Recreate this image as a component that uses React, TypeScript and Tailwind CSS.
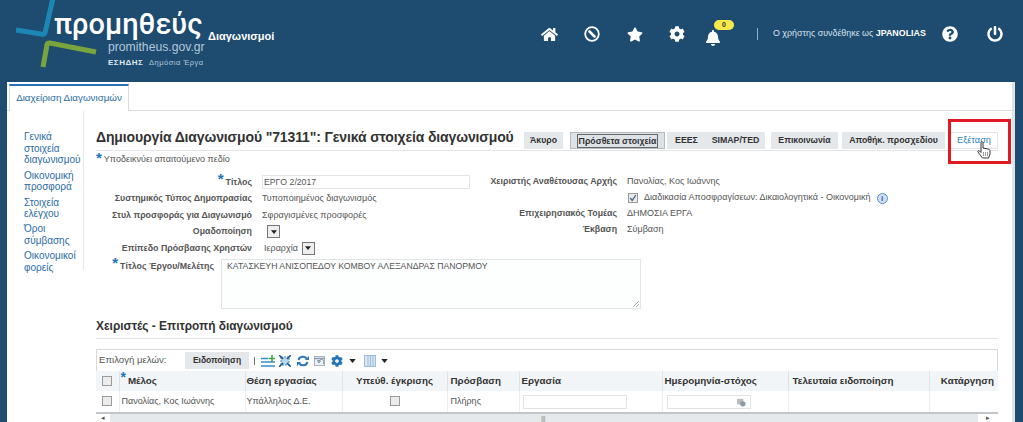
import React from "react";
import { FaHome, FaStar, FaCog, FaBell, FaQuestionCircle, FaPowerOff } from "react-icons/fa";

const Label = ({ children, req }: { children: React.ReactNode; req?: boolean }) => (
  <div className="text-right font-bold text-[8.8px] text-[#555] whitespace-nowrap">
    {req && <span className="text-[#1b75bc] text-[15px] leading-[8px] font-bold align-[1px] mr-[2px]">*</span>}
    {children}
  </div>
);

const Btn = ({ children, w, active, link }: { children: React.ReactNode; w: string; active?: boolean; link?: boolean }) => (
  <div className={`h-[17px] flex items-center justify-center whitespace-nowrap ${w} ${link ? "bg-white border border-[#e2e6ea] text-[#2f7fc4] text-[9.2px]" : active ? "bg-[#dde2e6] border border-[#b5babf] text-[#333] font-bold text-[8.75px]" : "bg-[#e4e8eb] text-[#333] font-bold text-[8.75px]"}`}>
    {active ? <span className="border border-[#666] px-[1px] leading-[12px]">{children}</span> : children}
  </div>
);

const Check = ({ on }: { on?: boolean }) => (
  <span className="inline-flex w-[10px] h-[10px] border border-[#9a9a9a] bg-[#ececec] items-center justify-center align-middle">
    {on && (
      <svg viewBox="0 0 10 10" className="w-[8px] h-[8px]"><path d="M1.5 5l2.5 3 4.5-6.5" fill="none" stroke="#3b5d86" strokeWidth="1.5" /></svg>
    )}
  </span>
);

const Drop = () => (
  <span className="inline-flex w-[13px] h-[13px] border border-[#777] bg-[#eceef0] items-center justify-center">
    <svg viewBox="0 0 8 5" className="w-[6px] h-[4px]"><path d="M0 0h8L4 5z" fill="#222" /></svg>
  </span>
);

const Nav = ({ children }: { children: React.ReactNode }) => <div className="text-[#2b6ca3] leading-[11.7px] mb-[3.5px]">{children}</div>;

export default function App() {
  return (
    <div className="w-[1023px] h-[422px] overflow-hidden bg-[#1e4b70] relative text-[9px] text-[#555]" style={{ fontFamily: '"Liberation Sans", Arial, sans-serif' }}>
      {/* header */}
      <div className="h-[82px] flex relative">
        <svg viewBox="0 0 110 72" className="w-[110px] h-[72px] shrink-0 absolute left-0 top-0">
          <path d="M53 -2 L45 33 Q44 35 41 34 L16 30" fill="none" stroke="#1c87b5" strokeWidth="5" />
          <path d="M43 67 L47 45 Q47 43 50 43 L96 52" fill="none" stroke="#7aa53c" strokeWidth="5" />
        </svg>
        <div className="absolute left-[54px] top-[6px] text-white text-[29px] leading-[36px] font-medium" style={{ fontFamily: 'Roboto, sans-serif' }}>προμηθεύς</div>
        <div className="absolute left-[108px] top-[39px] text-[#b4c8d8] text-[12.2px] leading-[16px]">promitheus.gov.gr</div>
        <div className="absolute left-[108px] top-[58px] text-[#dfe8ef] text-[8px] leading-[10px] font-bold tracking-[0.5px]">ΕΣΗΔΗΣ</div>
        <div className="absolute left-[149px] top-[58px] text-[#b4c8d8] text-[7.5px] leading-[10px] tracking-[0.5px]">Δημόσια Έργα</div>
        <div className="absolute left-[208px] top-[29px] text-white text-[11px] leading-[14px] font-bold">Διαγωνισμοί</div>

        <div className="ml-auto flex items-center h-[68px] text-white pr-[20px]">
          <FaHome className="w-[17px] h-[15px]" />
          <svg viewBox="0 0 16 16" className="w-[16px] h-[16px] ml-[26px]">
            <circle cx="8" cy="8" r="6.8" fill="none" stroke="#fff" strokeWidth="1.8" />
            <path d="M5.5 5.5L10.500 10.500" stroke="#fff" strokeWidth="2.600" strokeLinecap="round" />
          </svg>
          <FaStar className="w-[16px] h-[15px] ml-[27px]" />
          <FaCog className="w-[16px] h-[16px] ml-[26px]" />
          <div className="relative ml-[21px] w-[14px]">
            <FaBell className="w-[14px] h-[16px] mt-[8px]" />
            <span className="absolute left-[8px] top-[-2px] w-[20px] h-[10px] rounded-[5px] bg-[#f7e94b] text-[#333] text-[7px] leading-[10px] text-center font-bold">0</span>
          </div>
          <span className="w-px h-[12px] bg-[#8fb0c9] ml-[37px]" />
          <span className="ml-[15px] text-[#d9e4ec] text-[8.9px] whitespace-nowrap w-[155px]">Ο χρήστης συνδέθηκε ως <b className="text-white">JPANOLIAS</b></span>
          <FaQuestionCircle className="w-[16px] h-[16px] ml-[14px]" />
          <FaPowerOff className="w-[16px] h-[16px] ml-[29px]" />
        </div>
      </div>

      {/* panel */}
      <div className="ml-[7px] mr-[8px] h-[340px] bg-white border-r-[3px] border-[#dfe3e6] flex flex-col relative">
        <div className="h-[29px] border-b border-[#d8dcdf] pl-[2px] pt-[2px] shrink-0 flex">
          <div className="w-[120px] h-[27px] bg-white border-t-[2px] border-[#2a6fb5] border-x border-x-[#d8dcdf] text-[#2b6ca3] text-[9.8px] flex items-center justify-center relative">Διαχείριση Διαγωνισμών</div>
        </div>
        <div className="flex flex-1 min-h-0">
          {/* side */}
          <div className="w-[77px] h-[159px] border-r border-[#e6e8ea] shrink-0 pt-[20px] pl-[17px] text-[10px]">
            <Nav>Γενικά<br />στοιχεία<br />διαγωνισμού</Nav>
            <Nav>Οικονομική<br />προσφορά</Nav>
            <Nav>Στοιχεία<br />ελέγχου</Nav>
            <Nav>Όροι<br />σύμβασης</Nav>
            <Nav>Οικονομικοί<br />φορείς</Nav>
          </div>
          {/* main */}
          <div className="ml-[12px] w-[902px] flex flex-col">
            <div className="h-[40px] border-b border-[#e2e4e6] flex items-start pt-[21px] shrink-0">
              <div className="w-[428px] text-[14px] leading-[18px] font-bold text-[#333] tracking-[-0.13px] whitespace-nowrap -mt-[4px]">Δημιουργία Διαγωνισμού "71311": Γενικά στοιχεία διαγωνισμού</div>
              <div className="flex">
                <Btn w="w-[39px]">Άκυρο</Btn>
                <Btn w="w-[95px] ml-[7px]" active>Πρόσθετα στοιχεία</Btn>
                <Btn w="w-[39px] ml-[2px]">ΕΕΕΣ</Btn>
                <Btn w="w-[59px]">SIMAP/TED</Btn>
                <Btn w="w-[67px] ml-[6px]">Επικοινωνία</Btn>
                <Btn w="w-[103px] ml-[4px]">Αποθήκ. προσχεδίου</Btn>
                <Btn w="w-[48px] ml-[5px]" link>Εξέταση</Btn>
              </div>
            </div>
            <div className="h-[17px] flex items-center shrink-0">
              <span className="text-[#1b75bc] text-[15px] leading-[8px] font-bold mr-[2px] -mt-[4px]">*</span>Υποδεικνύει απαιτούμενο πεδίο
            </div>

            <div className="flex h-[85px] mt-[6px] shrink-0">
              <div className="grid grid-cols-[156px_auto] gap-x-[10px] w-[384px] auto-rows-[16.5px] items-center content-start">
                <Label req>Τίτλος</Label>
                <div className="w-[208px] h-[14px] border border-[#e2e5e8] pl-[1px] leading-[13px] text-[8.7px]">ΕΡΓΟ 2/2017</div>
                <Label>Συστημικός Τύπος Δημοπρασίας</Label>
                <div>Τυποποιημένος διαγωνισμός</div>
                <Label>Στυλ προσφοράς για Διαγωνισμό</Label>
                <div>Σφραγισμένες προσφορές</div>
                <Label>Ομαδοποίηση</Label>
                <div className="pl-[5px] flex"><Drop /></div>
                <Label>Επίπεδο Πρόσβασης Χρηστών</Label>
                <div className="flex items-center gap-[4px]"><span className="pl-[2px]">Ιεραρχία</span><Drop /></div>
              </div>
              <div className="grid grid-cols-[137px_auto] gap-x-[10px] auto-rows-[16px] items-center content-start">
                <Label>Χειριστής Αναθέτουσας Αρχής</Label>
                <div>Πανολίας, Κος Ιωάννης</div>
                <div />
                <div className="flex items-center gap-[6px] whitespace-nowrap pl-[1px]"><Check on /><span>Διαδικασία Αποσφραγίσεων: Δικαιολογητικά - Οικονομική</span>
                  <span className="w-[11px] h-[11px] rounded-full bg-[#cfe0f2] border border-[#5b8fd0] text-[#2a5fae] text-[8px] leading-[9px] text-center font-bold">i</span>
                </div>
                <Label>Επιχειρησιακός Τομέας</Label>
                <div>ΔΗΜΟΣΙΑ ΕΡΓΑ</div>
                <Label>Έκβαση</Label>
                <div>Σύμβαση</div>
              </div>
            </div>

            <div className="flex h-[50px] shrink-0 pl-[3px]">
              <div className="w-[115px]"><Label req>Τίτλος Έργου/Μελέτης</Label></div>
              <div className="ml-[7px] w-[420px] h-[50px] border border-[#e2e5e8] bg-[#fdfefe] pl-[5px] leading-[13px] text-[8.7px] relative">
                ΚΑΤΑΣΚΕΥΗ ΑΝΙΣΟΠΕΔΟΥ ΚΟΜΒΟΥ ΑΛΕΞΑΝΔΡΑΣ ΠΑΝΟΡΜΟΥ
                <svg viewBox="0 0 6 6" className="absolute right-[1px] bottom-[1px] w-[6px] h-[6px]"><path d="M0 6L6 0M3 6l3-3" stroke="#aaa" strokeWidth="1" /></svg>
              </div>
            </div>

            <div className="mt-[8px] h-[22px] border-b border-[#e2e4e6] text-[11.9px] leading-[18px] font-bold text-[#333] shrink-0">Χειριστές - Επιτροπή διαγωνισμού</div>

            <div className="mt-[10px] w-[902px] border-t border-x border-[#d5d8da] h-[22px] flex items-center pl-[1px] shrink-0">
              <span className="w-[87px] pl-[1px] text-[9.6px]">Επιλογή μελών:</span>
              <span className="w-[64px] h-[17px] bg-[#e4e8eb] font-bold text-[8.5px] text-[#333] flex items-center justify-center">Ειδοποίηση</span>
              <span className="w-px h-[8px] bg-[#777] ml-[5px]" />
              <svg viewBox="0 0 14 12" className="w-[14px] h-[12px] ml-[6px]"><path d="M0 3.500h7M0 7h14M0 11h14" stroke="#3a8fc9" strokeWidth="1.300" /><path d="M11 0v7M7.500 3.500h7" stroke="#3fa648" strokeWidth="1.600" /></svg>
              <svg viewBox="0 0 12 12" className="w-[12px] h-[12px] ml-[4px]"><rect x="2" y="2" width="8" height="8" fill="#b8d6ea" stroke="#3a8fc9" strokeDasharray="2 1" /><path d="M0 0l4 4M12 0L8 4M0 12l4-4M12 12L8 8" stroke="#1c4f87" strokeWidth="1.500" /></svg>
              <svg viewBox="0 0 12 12" className="w-[12px] h-[12px] ml-[6px]"><path d="M1.500 5A4.500 4 0 0 1 10 4M10.500 7A4.500 4 0 0 1 2 8" fill="none" stroke="#2c78bf" strokeWidth="2" /><path d="M8 5h4V1zM4 7H0v4z" fill="#2c78bf" /></svg>
              <svg viewBox="0 0 12 12" className="w-[12px] h-[12px] ml-[5px]"><rect x="0.500" y="1.500" width="10" height="9" fill="#eef2f6" stroke="#a7b5c4" /><path d="M0 3.500h11" stroke="#8b9fb5" strokeWidth="1.500" /><path d="M9 9A2.500 2.500 0 1 0 5 6.500M3.500 5.500L5 8l1.500-2z" fill="none" stroke="#7a8fa6" /></svg>
              <FaCog className="w-[12px] h-[12px] ml-[5px] text-[#2474b8]" />
              <svg viewBox="0 0 8 5" className="w-[7px] h-[4px] ml-[6px]"><path d="M0 0h8L4 5z" fill="#222" /></svg>
              <svg viewBox="0 0 12 12" className="w-[12px] h-[12px] ml-[8px]"><rect x="0.500" y="0.500" width="11" height="11" fill="#d6e6f5" stroke="#9dbcdb" /><path d="M4 0v12M6.500 0v12M9 0v12" stroke="#9dbcdb" /></svg>
              <svg viewBox="0 0 8 5" className="w-[7px] h-[4px] ml-[5px]"><path d="M0 0h8L4 5z" fill="#222" /></svg>
            </div>
            <table className="w-[902px] table-fixed border-collapse shrink-0">
              <colgroup>
                <col className="w-[23px]" /><col className="w-[126px]" /><col className="w-[97px]" /><col className="w-[105px]" /><col className="w-[72px]" /><col className="w-[143px]" /><col className="w-[126px]" /><col className="w-[141px]" /><col className="w-[69px]" />
              </colgroup>
              <thead>
                <tr className="h-[20px] bg-[#f2f5f7] text-[#333] text-[9.8px] font-bold">
                  <th className="text-center border-r border-[#e0e3e5]"><Check /></th>
                  <th className="text-left pl-[1px] border-r border-[#e0e3e5] whitespace-nowrap"><span className="text-[#1b75bc] text-[14px] leading-[8px] align-[2px] mr-[2px]">*</span>Μέλος</th>
                  <th className="text-left pl-[1px] border-r border-[#e0e3e5]">Θέση εργασίας</th>
                  <th className="text-center border-r border-[#e0e3e5] whitespace-nowrap">Υπεύθ. έγκρισης</th>
                  <th className="text-left pl-[3px] border-r border-[#e0e3e5]">Πρόσβαση</th>
                  <th className="text-left pl-[2px] border-r border-[#e0e3e5]">Εργασία</th>
                  <th className="text-left pl-[2px] border-r border-[#e0e3e5] whitespace-nowrap">Ημερομηνία-στόχος</th>
                  <th className="text-left pl-[4px] border-r border-[#e0e3e5] whitespace-nowrap">Τελευταία ειδοποίηση</th>
                  <th className="text-right pr-[4px] whitespace-nowrap">Κατάργηση</th>
                </tr>
              </thead>
              <tbody>
                <tr className="h-[21px]">
                  <td className="text-center border-r border-[#eceef0]"><Check /></td>
                  <td className="pl-[2px] border-r border-[#eceef0]">Πανολίας, Κος Ιωάννης</td>
                  <td className="pl-[1px] border-r border-[#eceef0]">Υπάλληλος Δ.Ε.</td>
                  <td className="text-center border-r border-[#eceef0]"><Check /></td>
                  <td className="pl-[3px] border-r border-[#eceef0]">Πλήρης</td>
                  <td className="pl-[3px] border-r border-[#eceef0]"><div className="w-[104px] h-[14px] border border-[#e2e5e8]" /></td>
                  <td className="pl-[4px] border-r border-[#eceef0]">
                    <div className="w-[84px] h-[14px] border border-[#e2e5e8] relative">
                      <svg viewBox="0 0 10 10" className="absolute right-[4px] top-[2px] w-[9px] h-[9px]"><rect x="0" y="1" width="7" height="6" fill="#bbb" /><circle cx="6.500" cy="6.500" r="3" fill="#8a9aa5" /></svg>
                    </div>
                  </td>
                  <td className="border-r border-[#eceef0]" />
                  <td />
                </tr>
              </tbody>
            </table>
            <div className="w-[902px] h-[11px] bg-[#e6e9eb] border-t-2 border-[#c2c6c9] flex items-center shrink-0 text-[#555] text-[7px] leading-none">
              <span className="w-[14px] bg-white h-full text-center">◂</span>
              <span className="flex-1 text-center pr-[2px] text-[#888] tracking-[-0.5px]">|||</span>
              <span className="w-[20px] bg-white h-full text-center">▸</span>
            </div>
          </div>
        </div>
      </div>

      {/* highlight */}
      <div className="absolute left-[948px] top-[119px] w-[63px] h-[45px] border-[3px] border-[#e01a22] pointer-events-none" />
      <svg viewBox="0 0 14 18" className="absolute left-[977px] top-[141px] w-[14px] h-[18px]">
        <path d="M4 1.500c0-1 2-1 2 0V7l5 1c1.500.3 2 1 2 2v3l-1.500 4h-6L1 11c-.7-1 .6-2 1.500-1L4 11.500z" fill="#fff" stroke="#222" strokeWidth="0.900" />
        <path d="M6.500 11v4M8.500 11v4M10.500 11v4" stroke="#555" strokeWidth="0.600" />
      </svg>
    </div>
  );
}
